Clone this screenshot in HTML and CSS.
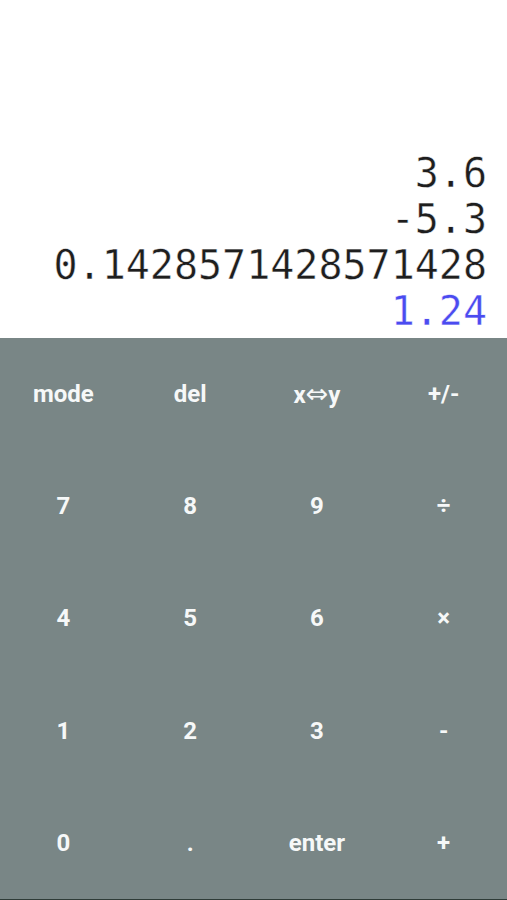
FILE: index.html
```html
<!DOCTYPE html>
<html lang="en">
<head>
    <meta charset="UTF-8">
    <meta name="viewport" content="width=device-width, initial-scale=1.0">
    <title>RPN Calculator</title>
    <link rel="stylesheet" href="styles.css">
</head>
<body>
    <div id="app">
        <div id="stack">
            <div class="entry">3.6</div>
            <div class="entry">-5.3</div>
            <div class="entry">0.1428571428571428</div>
            <div class="entry current">1.24</div>
        </div>
        <div id="keypad">
            <button class="key">mode</button>
            <button class="key">del</button>
            <button class="key">x<span class="swap">&#8660;</span>y</button>
            <button class="key">+/-</button>
            <button class="key">7</button>
            <button class="key">8</button>
            <button class="key">9</button>
            <button class="key">&divide;</button>
            <button class="key">4</button>
            <button class="key">5</button>
            <button class="key">6</button>
            <button class="key">&times;</button>
            <button class="key">1</button>
            <button class="key">2</button>
            <button class="key">3</button>
            <button class="key">-</button>
            <button class="key">0</button>
            <button class="key">.</button>
            <button class="key">enter</button>
            <button class="key">+</button>
        </div>
        <div id="navBar"></div>
    </div>
</body>
</html>
```

FILE: styles.css
```css
* {
    margin: 0;
    padding: 0;
    box-sizing: border-box;
}

body {
    background: #ffffff;
    font-family: Roboto, Arial, sans-serif;
    overflow: hidden;
}

#app {
    display: flex;
    flex-direction: column;
    width: 100vw;
    height: 100vh;
}

#stack {
    flex: 1;
    display: flex;
    flex-direction: column;
    justify-content: flex-end;
    align-items: flex-end;
    padding: 0 20px 4px 0;
    font-family: "DejaVu Sans Mono", "Liberation Mono", monospace;
    font-size: 40px;
    color: #1e1e1e;
    -webkit-text-stroke: 0.4px #ffffff;
}

.entry {
    white-space: nowrap;
}

.entry.current {
    color: #4b4bf0;
}

#keypad {
    height: 561px;
    display: grid;
    grid-template-columns: repeat(4, 1fr);
    grid-template-rows: repeat(5, 1fr);
    background: #798686;
}

.key {
    background: transparent;
    border: none;
    color: #f6f8f8;
    font-family: Roboto, Arial, sans-serif;
    font-weight: bold;
    font-size: 24px;
    line-height: 28px;
    cursor: pointer;
}

.swap {
    font-family: "DejaVu Sans", sans-serif;
    font-weight: normal;
    font-size: 27px;
}

#navBar {
    height: 1px;
    background: #2f3c38;
}
```
